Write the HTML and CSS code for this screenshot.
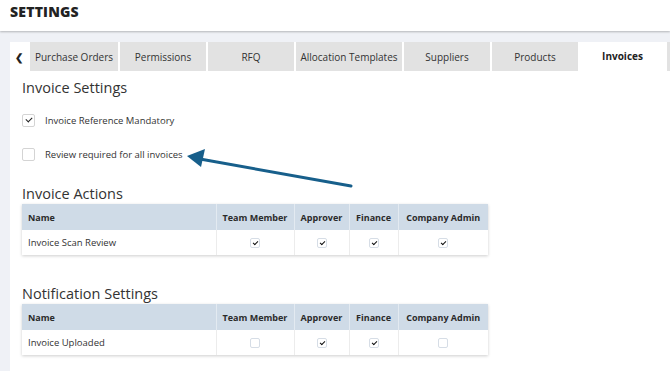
FILE: index.html
```html
<!DOCTYPE html>
<html lang="en">
<head>
    <meta charset="UTF-8">
    <title>Settings - Invoices</title>
    <link rel="stylesheet" href="styles.css">
</head>
<body>
    <header class="topbar">
        <h1>SETTINGS</h1>
    </header>
    <main class="page">
        <nav class="tabs">
            <span class="tab tab-back">&#10094;</span>
            <span class="tab w88">Purchase Orders</span>
            <span class="tab w86">Permissions</span>
            <span class="tab w86">RFQ</span>
            <span class="tab w106">Allocation Templates</span>
            <span class="tab w86">Suppliers</span>
            <span class="tab w86">Products</span>
            <span class="tab tab-active w85">Invoices</span>
            <span class="tab w20"></span>
        </nav>
        <section class="panel">
            <h2>Invoice Settings</h2>
            <label class="check-row">
                <span class="box checked"></span>
                Invoice Reference Mandatory
            </label>
            <label class="check-row">
                <span class="box"></span>
                Review required for all invoices
            </label>

            <h2 class="table-title">Invoice Actions</h2>
            <table class="roles">
                <thead>
                    <tr>
                        <th class="col-name">Name</th>
                        <th class="col-team">Team Member</th>
                        <th class="col-appr">Approver</th>
                        <th class="col-fin">Finance</th>
                        <th class="col-admin">Company Admin</th>
                    </tr>
                </thead>
                <tbody>
                    <tr>
                        <td>Invoice Scan Review</td>
                        <td><span class="mini checked"></span></td>
                        <td><span class="mini checked"></span></td>
                        <td><span class="mini checked"></span></td>
                        <td><span class="mini checked"></span></td>
                    </tr>
                </tbody>
            </table>

            <h2 class="table-title gap-top">Notification Settings</h2>
            <table class="roles">
                <thead>
                    <tr>
                        <th class="col-name">Name</th>
                        <th class="col-team">Team Member</th>
                        <th class="col-appr">Approver</th>
                        <th class="col-fin">Finance</th>
                        <th class="col-admin">Company Admin</th>
                    </tr>
                </thead>
                <tbody>
                    <tr>
                        <td>Invoice Uploaded</td>
                        <td><span class="mini"></span></td>
                        <td><span class="mini checked"></span></td>
                        <td><span class="mini checked"></span></td>
                        <td><span class="mini"></span></td>
                    </tr>
                </tbody>
            </table>
        </section>
    </main>

    <!-- annotation arrow drawn over the page -->
    <svg class="arrow" width="670" height="371" viewBox="0 0 670 371">
        <line x1="351" y1="186" x2="200" y2="159" stroke="#175f8b" stroke-width="3" stroke-linecap="round"/>
        <polygon points="187,156 205,149 201,167" fill="#175f8b"/>
    </svg>
</body>
</html>
```

FILE: styles.css
```css
* {
    margin: 0;
    padding: 0;
    box-sizing: border-box;
}

body {
    font-family: 'Open Sans', 'Liberation Sans', sans-serif;
    background: #eff1f6;
    color: #333;
    width: 670px;
    height: 371px;
    overflow: hidden;
    position: relative;
    display: flex;
    flex-direction: column;
}

.topbar {
    background: #fff;
    height: 31px;
    flex-shrink: 0;
    padding: 2px 10px 0;
    box-shadow: 0 1px 2px rgba(0, 0, 0, 0.25);
}

.topbar h1 {
    font-size: 14px;
    font-weight: 800;
    color: #222;
    letter-spacing: 0.2px;
}

.page {
    flex: 1;
    min-height: 0;
    display: flex;
    flex-direction: column;
    padding: 11px 0 0 10px;
}

.tabs {
    display: flex;
    gap: 2px;
    height: 29px;
    flex-shrink: 0;
    background: #fff;
}

.tab {
    background: #e2e2e2;
    font-size: 10px;
    color: #333;
    display: flex;
    align-items: center;
    justify-content: center;
    flex-shrink: 0;
    white-space: nowrap;
}

.tab-back {
    width: 18px;
    background: #fff;
    font-size: 10px;
    font-weight: 700;
    color: #222;
}

.tab-active {
    background: #fff;
    font-weight: 700;
    color: #222;
    padding-bottom: 2px;
}

.w20 { width: 20px; }
.w85 { width: 85px; }
.w86 { width: 86px; }
.w88 { width: 88px; }
.w106 { width: 106px; }

.panel {
    flex: 1;
    min-height: 0;
    background: #fff;
    padding: 8px 12px 0;
}

.panel h2 {
    font-size: 14.5px;
    font-weight: 400;
    color: #333;
    line-height: 18px;
    margin-bottom: 16px;
}

.panel h2.table-title {
    margin-bottom: 1px;
}

.panel h2.gap-top {
    margin-top: 30px;
}

.check-row {
    display: flex;
    align-items: center;
    gap: 10px;
    font-size: 9.5px;
    color: #333;
    height: 14px;
    margin-bottom: 20px;
}

.check-row:last-of-type {
    margin-bottom: 24px;
}

.box {
    width: 13px;
    height: 13px;
    border: 1px solid #d4d4d4;
    border-radius: 2px;
    position: relative;
}

.box.checked::after {
    content: '';
    position: absolute;
    left: 3px;
    top: 2px;
    width: 5px;
    height: 3px;
    border-left: 1.5px solid #222;
    border-bottom: 1.5px solid #222;
    transform: rotate(-45deg);
}

.roles {
    border-collapse: collapse;
    width: 466px;
    box-shadow: 0 1px 3px rgba(0, 0, 0, 0.2);
    font-size: 9.5px;
}

.roles th {
    background: #cfdbe7;
    font-size: 9px;
    font-weight: 700;
    height: 26px;
    text-align: center;
    color: #2b2b2b;
    border-right: 1px solid #e3eaf1;
}

.roles th.col-name {
    text-align: left;
    padding-left: 6px;
}

.roles td {
    height: 25px;
    text-align: center;
    border-right: 1px solid #ececec;
    color: #333;
}

.roles td:first-child {
    text-align: left;
    padding-left: 6px;
}

.roles th:last-child,
.roles td:last-child {
    border-right: none;
}

.col-name { width: 194px; }
.col-team { width: 78px; }
.col-appr { width: 55px; }
.col-fin { width: 49px; }
.col-admin { width: 90px; }

.mini {
    display: inline-block;
    width: 10px;
    height: 10px;
    border: 1px solid #d6dde6;
    border-radius: 2px;
    position: relative;
    vertical-align: middle;
}

.mini.checked::after {
    content: '';
    position: absolute;
    left: 2px;
    top: 1.5px;
    width: 4px;
    height: 2px;
    border-left: 1.5px solid #111;
    border-bottom: 1.5px solid #111;
    transform: rotate(-45deg);
}

.arrow {
    position: absolute;
    left: 0;
    top: 0;
    pointer-events: none;
}
```
